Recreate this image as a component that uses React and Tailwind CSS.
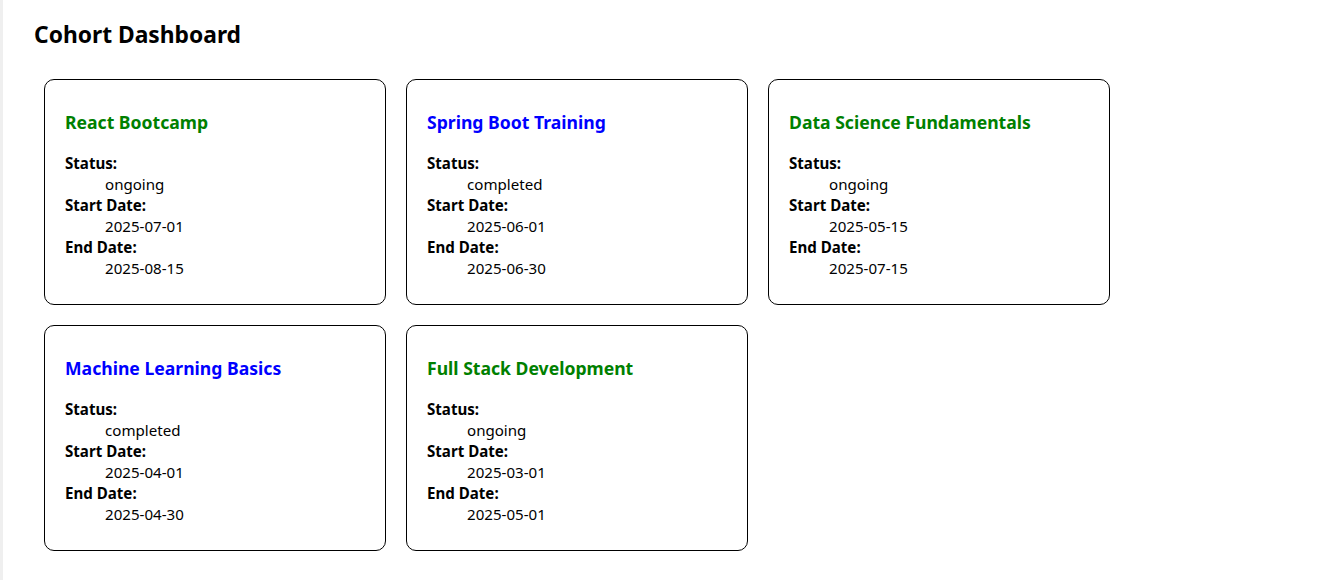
const cohorts = [
  { name: 'React Bootcamp', status: 'ongoing', start: '2025-07-01', end: '2025-08-15' },
  { name: 'Spring Boot Training', status: 'completed', start: '2025-06-01', end: '2025-06-30' },
  { name: 'Data Science Fundamentals', status: 'ongoing', start: '2025-05-15', end: '2025-07-15' },
  { name: 'Machine Learning Basics', status: 'completed', start: '2025-04-01', end: '2025-04-30' },
  { name: 'Full Stack Development', status: 'ongoing', start: '2025-03-01', end: '2025-05-01' },
];

function CohortCard({ cohort }) {
  const color = cohort.status === 'ongoing' ? 'text-[#008000]' : 'text-[#0000ff]';
  return (
    <div className="w-[342px] h-[226px] border border-black rounded-[10px] px-5 pt-[30px]">
      <h3 className={`text-[17.6px] font-bold leading-[25px] ${color}`}>{cohort.name}</h3>
      <dl className="mt-[18px] text-[15.1px] leading-[21px]">
        <dt className="font-bold">Status:</dt>
        <dd className="ml-10">{cohort.status}</dd>
        <dt className="font-bold">Start Date:</dt>
        <dd className="ml-10">{cohort.start}</dd>
        <dt className="font-bold">End Date:</dt>
        <dd className="ml-10">{cohort.end}</dd>
      </dl>
    </div>
  );
}

export default function App() {
  return (
    <div className="flex min-h-[580px] bg-white text-black font-['Noto_Sans',sans-serif]">
      <div className="w-[3px] bg-[#efefef]" />
      <div className="flex-1 pl-[31px] pt-[19px]">
        <h2 className="text-[22.8px] font-bold leading-[32px]">Cohort Dashboard</h2>
        <div className="mt-[28px] pl-[10px] flex flex-wrap gap-5 w-[1100px]">
          {cohorts.map((c) => (
            <CohortCard key={c.name} cohort={c} />
          ))}
        </div>
      </div>
    </div>
  );
}
